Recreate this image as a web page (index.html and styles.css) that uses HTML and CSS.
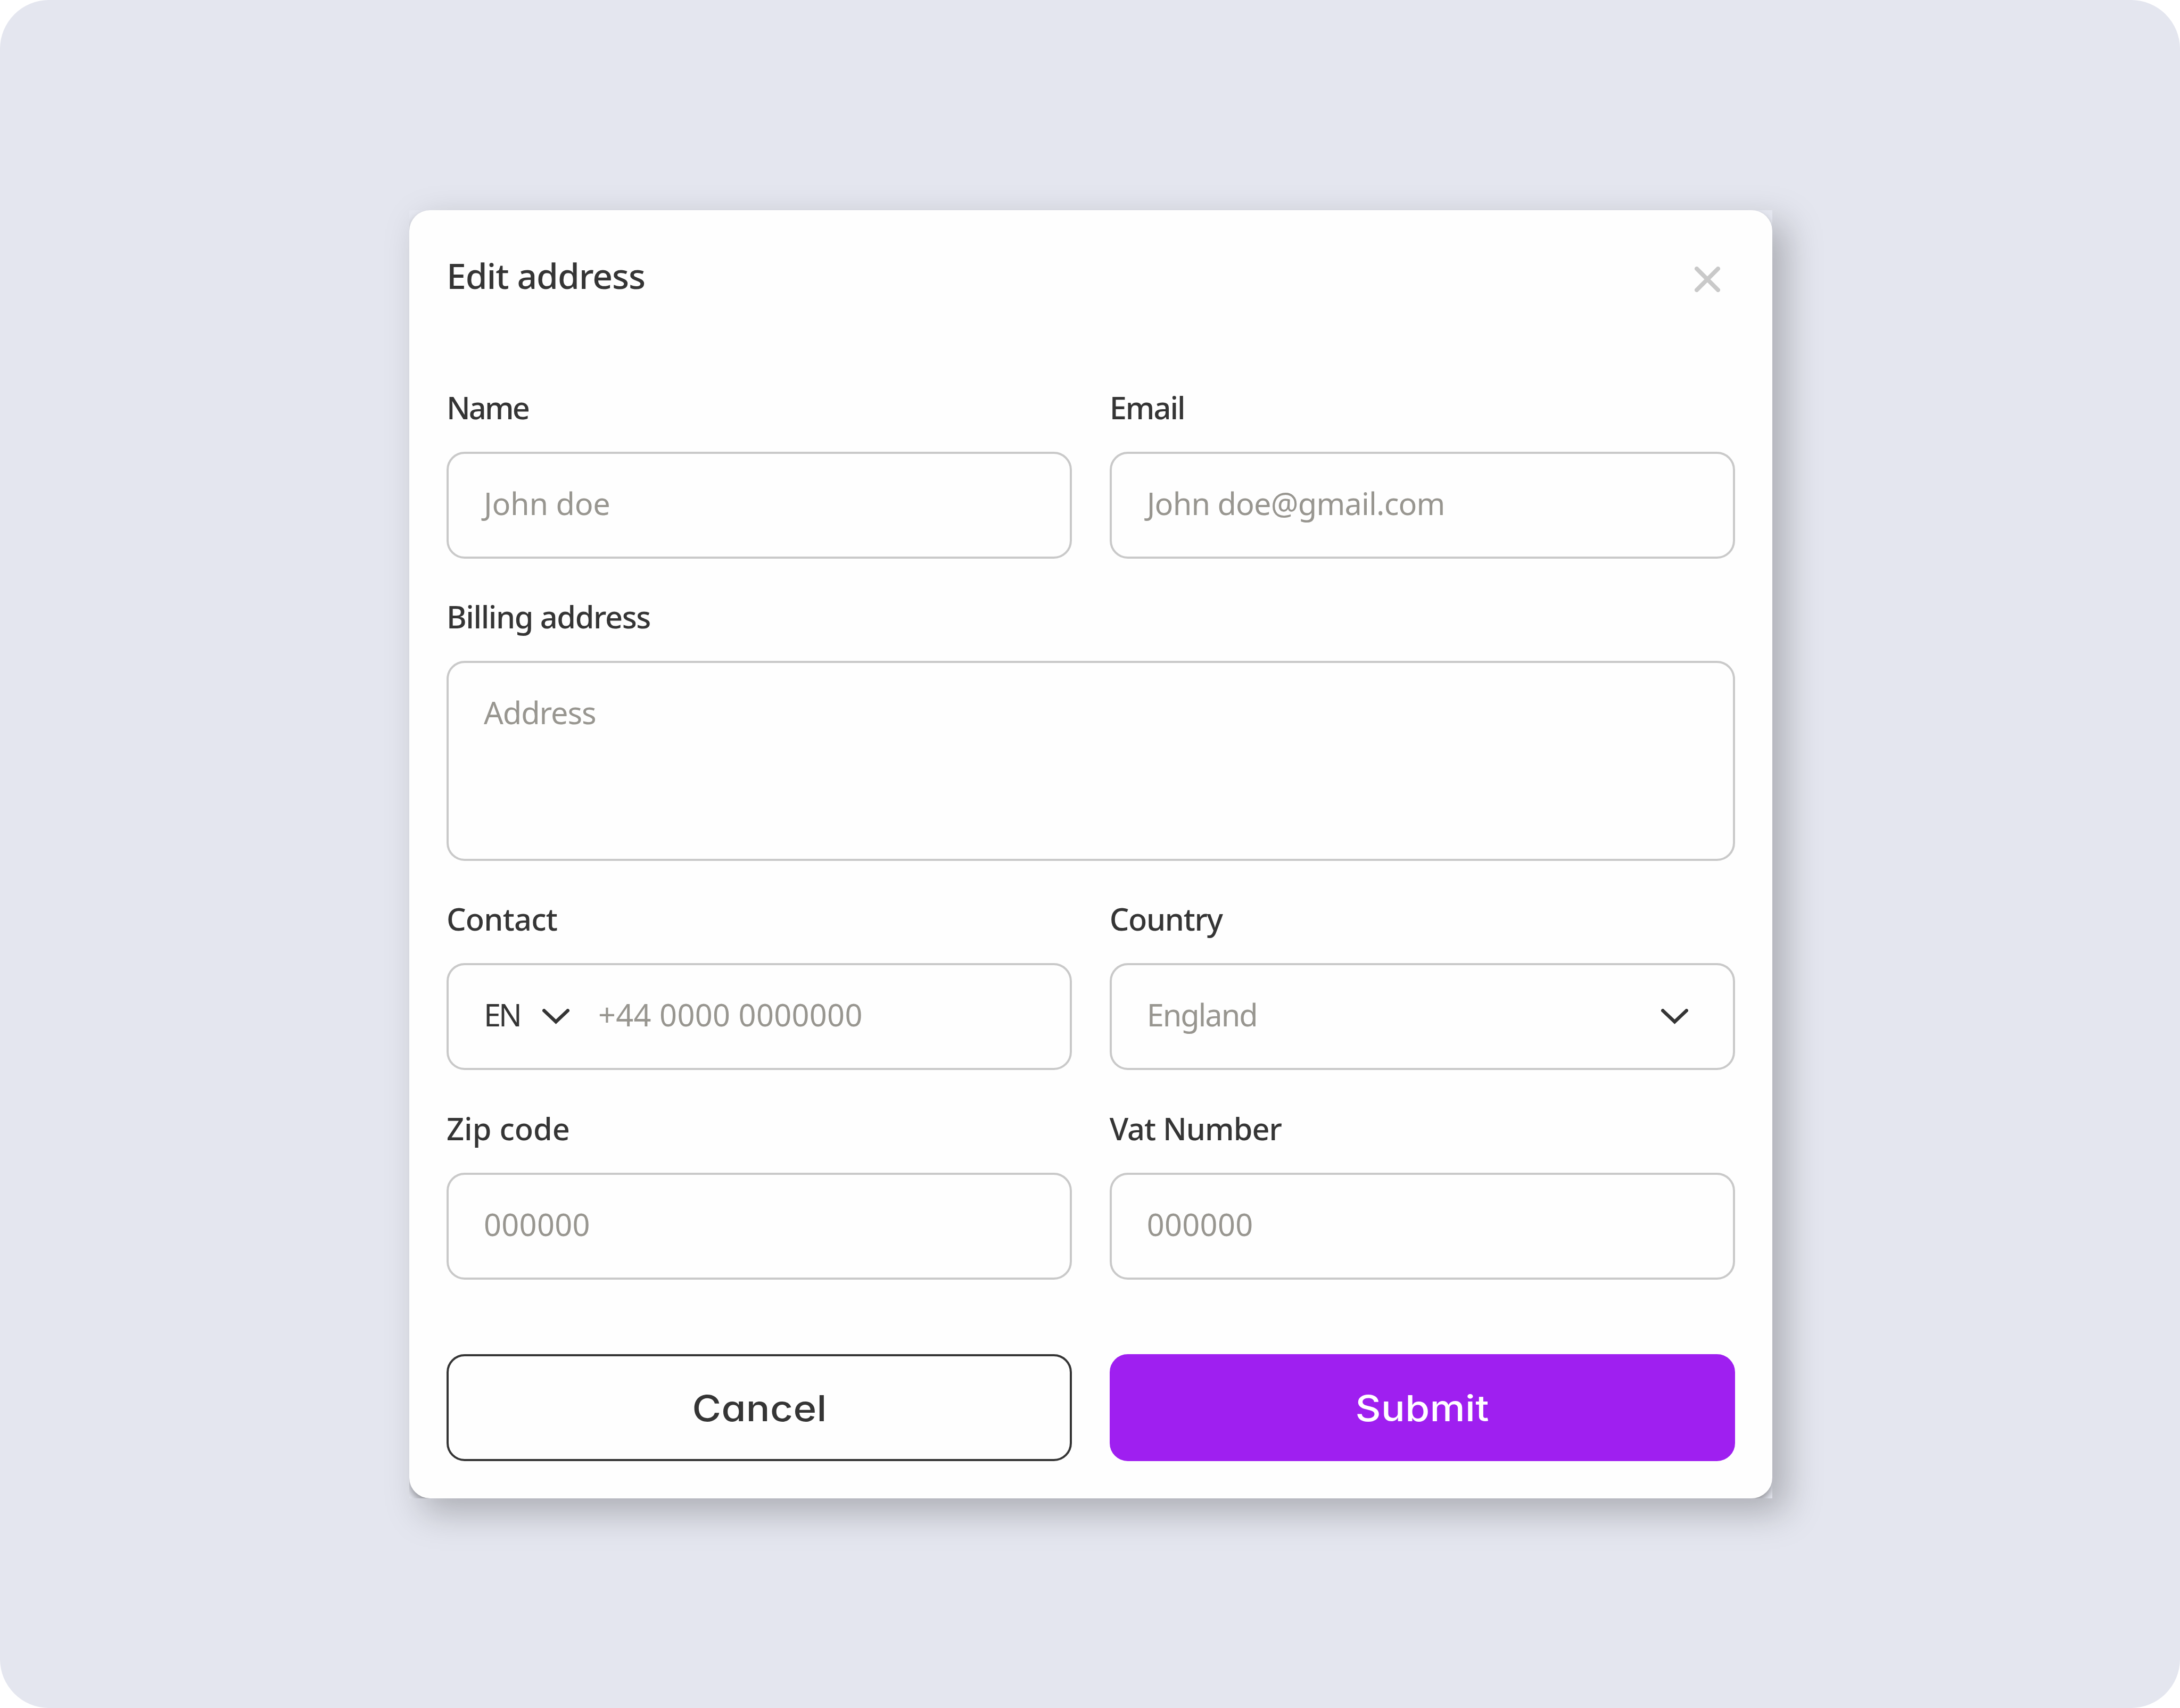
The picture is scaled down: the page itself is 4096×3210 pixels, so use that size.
FILE: index.html
```html
<!DOCTYPE html>
<html lang="en">
<head>
    <meta charset="UTF-8">
    <meta name="viewport" content="width=device-width, initial-scale=1.0">
    <title>Edit address</title>
    <link rel="stylesheet" href="styles.css">
</head>
<body>
<div class="page">
    <div class="modal">
        <form class="card">
            <div class="header">
                <h1>Edit address</h1>
                <svg class="close" viewBox="0 0 48 48">
                    <path d="M4 4L44 44M44 4L4 44"/>
                </svg>
            </div>

            <div class="fields">
                <div class="field">
                    <label class="label-name">Name</label>
                    <div class="input"><span class="placeholder">John doe</span></div>
                </div>
                <div class="field">
                    <label class="label-email">Email</label>
                    <div class="input"><span class="placeholder email">John doe@gmail.com</span></div>
                </div>
                <div class="field wide">
                    <label class="label-billing">Billing address</label>
                    <div class="input textarea"><span class="placeholder address">Address</span></div>
                </div>
                <div class="field">
                    <label class="label-contact">Contact</label>
                    <div class="input">
                        <span class="code">EN</span>
                        <svg class="chevron" viewBox="0 0 51 29"><path d="M3.2 3.2L25.5 24.3L47.8 3.2"/></svg>
                        <span class="placeholder number">+44 0000 0000000</span>
                    </div>
                </div>
                <div class="field">
                    <label class="label-country">Country</label>
                    <div class="input select">
                        <span class="placeholder country">England</span>
                        <svg class="chevron" viewBox="0 0 51 29"><path d="M3.2 3.2L25.5 24.3L47.8 3.2"/></svg>
                    </div>
                </div>
                <div class="field">
                    <label class="label-zip">Zip code</label>
                    <div class="input"><span class="placeholder number">000000</span></div>
                </div>
                <div class="field">
                    <label class="label-vat">Vat Number</label>
                    <div class="input"><span class="placeholder number">000000</span></div>
                </div>
            </div>

            <div class="actions">
                <button type="button" class="button cancel"><span>Cancel</span></button>
                <button type="button" class="button submit"><span>Submit</span></button>
            </div>
        </form>
    </div>
</div>
</body>
</html>
```
FILE: styles.css
```css
* {
    box-sizing: border-box;
}
body {
    margin: 0;
    background: #fff;
    color: #353535;
    font-family: "Noto Sans", "Open Sans", sans-serif;
}
.page {
    display: flex;
    justify-content: center;
    align-items: flex-start;
    width: 4096px;
    height: 3210px;
    padding: 395px 0 0 3px;
    background: #e4e6ef;
    border-radius: 92px;
}
.modal {
    width: 2561px;
    height: 2421px;
    overflow: hidden;
    background: #e4e6ef;
    box-shadow: 25px 25px 64px rgba(0, 0, 0, 0.255);
}
.card {
    height: 100%;
    padding: 76px 70px 70px;
    background: #fefefe;
    border-radius: 39px;
    box-shadow: 0 8px 14px rgba(0, 0, 0, 0.35);
}
.header {
    display: flex;
    justify-content: space-between;
    height: 90px;
    margin-bottom: 164.8px;
}
h1 {
    margin: 0;
    font-size: 66px;
    font-weight: 500;
    line-height: 92px;
    letter-spacing: -1.1px;
}
.close {
    width: 48px;
    height: 48px;
    margin: 30px 28px 0 0;
    fill: none;
    stroke: #c9c9c9;
    stroke-width: 8;
    stroke-linecap: round;
}
.fields {
    display: grid;
    grid-template-columns: 1fr 1fr;
    gap: 69.3px 70.4px;
}
.wide {
    grid-column: span 2;
}
label {
    display: block;
    margin-bottom: 43px;
    font-size: 57.7px;
    font-weight: 500;
    line-height: 80px;
}
.label-name {
    letter-spacing: -2.9px;
}
.label-email {
    letter-spacing: -2px;
}
.label-billing {
    letter-spacing: -1.4px;
}
.label-contact {
    letter-spacing: -0.8px;
}
.label-country {
    letter-spacing: -1.3px;
}
.label-vat {
    letter-spacing: -1px;
}
.input {
    display: flex;
    align-items: center;
    height: 201px;
    padding: 0 66px;
    border: 4px solid #c9c9c9;
    border-radius: 34px;
    font-size: 57.7px;
    line-height: 80px;
    white-space: nowrap;
}
.input span {
    margin-bottom: 7px;
}
.textarea {
    align-items: flex-start;
    height: 376px;
    padding-top: 53px;
}
.placeholder {
    color: #989690;
    letter-spacing: -0.3px;
}
.email {
    letter-spacing: -0.85px;
}
.address {
    letter-spacing: -1.1px;
}
.country {
    letter-spacing: -2.1px;
}
.number {
    letter-spacing: 0.3px;
}
.code {
    letter-spacing: -4px;
}
.code + .chevron {
    margin: 0 54px 0 42px;
}
.chevron {
    width: 51px;
    height: 29px;
    fill: none;
    stroke: #353535;
    stroke-width: 6.4;
    stroke-linecap: round;
}
.select {
    justify-content: space-between;
    padding-right: 84px;
}
.actions {
    display: grid;
    grid-template-columns: 1fr 1fr;
    gap: 70.4px;
    margin-top: 140px;
}
.button {
    height: 201px;
    padding: 2px 0 0;
    border: 4px solid #353535;
    border-radius: 34px;
    background: transparent;
    color: #353535;
    font-family: Inter, sans-serif;
    font-feature-settings: "cv11"; /* single-storey a */
    font-size: 67px;
    font-weight: 500;
    letter-spacing: 0.4px;
}
.button span {
    display: inline-block;
    transform: scaleX(1.11);
}
.submit {
    border-color: #9f1ff0;
    background: #9f1ff0;
    color: #fff;
}
```
